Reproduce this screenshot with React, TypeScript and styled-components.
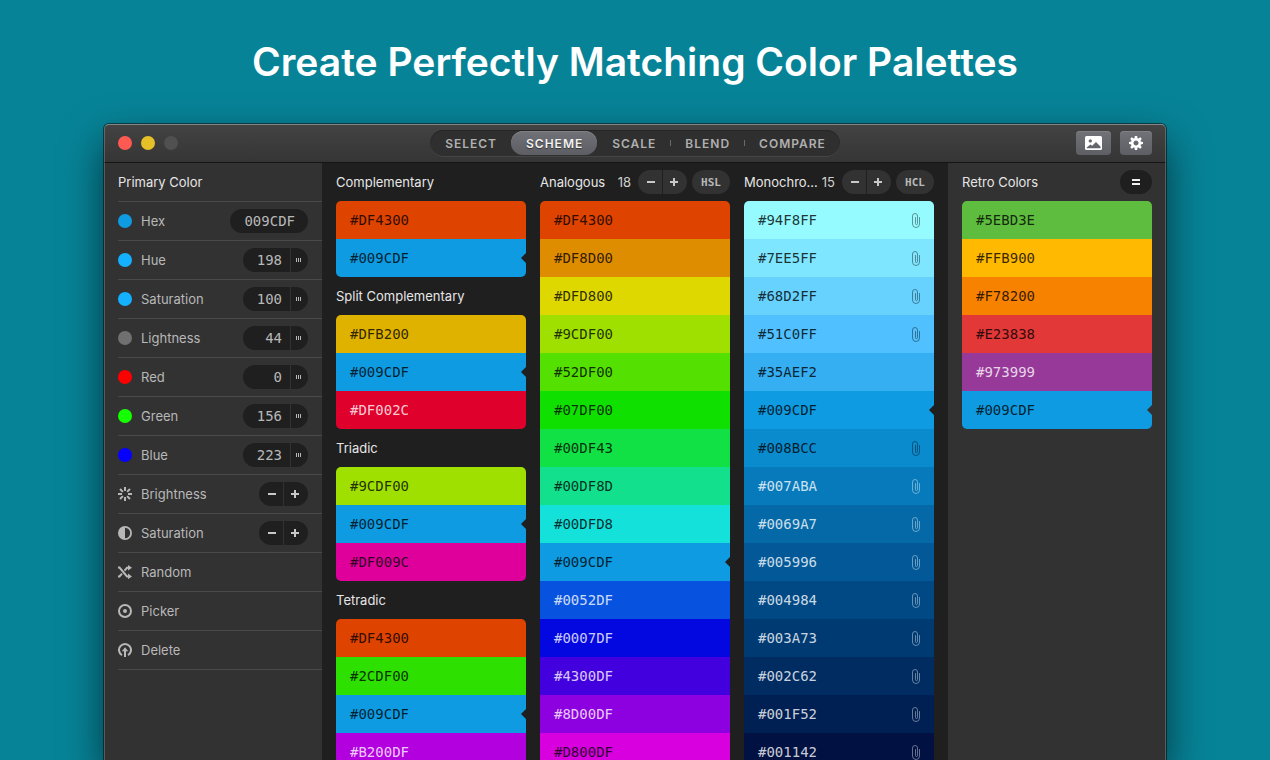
import React from "react";
import styled, { createGlobalStyle } from "styled-components";

const sans = `Inter, "Liberation Sans", sans-serif`;
const mono = `"DejaVu Sans Mono", "Liberation Mono", monospace`;

const GlobalStyle = createGlobalStyle`
  *, *::before, *::after { box-sizing: border-box; }
  body { margin: 0; background: #078397; font-family: ${sans}; -webkit-font-smoothing: antialiased; }
  button, input { font: inherit; color: inherit; background: none; border: 0; margin: 0; padding: 0; }
  button { cursor: pointer; }
  ul { list-style: none; margin: 0; padding: 0; }
`;

const Page = styled.main`
  height: 100vh;
  min-width: 1100px;
  display: flex;
  flex-direction: column;
  overflow: hidden;
  padding: 0 104px;
`;

const Headline = styled.h1`
  margin: 0;
  height: 124px;
  flex: none;
  display: flex;
  align-items: center;
  justify-content: center;
  color: #fff;
  font-size: 39px;
  line-height: 48px;
  font-weight: 600;
`;

const Window = styled.section`
  position: relative;
  flex: 1;
  min-height: 0;
  display: flex;
  flex-direction: column;
  border-radius: 5px 5px 0 0;
  box-shadow: 0 0 0 1px rgba(0, 0, 0, 0.5), 0 18px 42px rgba(0, 0, 0, 0.6);

  &::after {
    content: "";
    position: absolute;
    inset: 0;
    border: 1px solid rgba(255, 255, 255, 0.2);
    border-top-color: rgba(255, 255, 255, 0.36);
    border-bottom: 0;
    border-radius: 5px 5px 0 0;
    pointer-events: none;
  }
`;

const TitleBar = styled.header`
  flex: none;
  height: 39px;
  display: grid;
  grid-template-columns: 1fr auto 1fr;
  align-items: center;
  padding: 0 14px;
  background: linear-gradient(#434343, #353535);
  border-bottom: 1px solid #151515;
  border-radius: 5px 5px 0 0;
`;

const Lights = styled.div`
  display: flex;
  gap: 9px;
`;

const Light = styled.button<{ $color: string }>`
  width: 14px;
  height: 14px;
  border-radius: 50%;
  background: ${(p) => p.$color};
`;

const Tabs = styled.nav`
  display: flex;
  align-items: center;
  height: 27px;
  padding: 1px 0;
  border-radius: 14px;
  background: #2f2f2f;
  box-shadow: inset 0 1px 0 #262626, inset 0 -1px 0 #454545;
`;

const Tab = styled.button<{ $active?: boolean; $divided?: boolean }>`
  position: relative;
  height: 24px;
  padding: 0 14px 0 15px;
  border-radius: 12px;
  font-size: 12px;
  font-weight: 600;
  letter-spacing: 1px;
  color: ${(p) => (p.$active ? "#f2f2f2" : "#b0b0b0")};
  background: ${(p) => (p.$active ? "linear-gradient(#717277, #5d5e63)" : "none")};
  text-shadow: ${(p) => (p.$active ? "0 1px 1px rgba(0, 0, 0, 0.5)" : "none")};
  box-shadow: ${(p) => (p.$active ? "inset 0 1px 0 #7f8084" : "none")};

  &::before {
    content: "";
    display: ${(p) => (p.$divided ? "block" : "none")};
    position: absolute;
    left: 0;
    top: 9px;
    width: 1px;
    height: 6px;
    background: #6a6a6a;
  }
`;

const Tools = styled.div`
  display: flex;
  justify-content: flex-end;
  gap: 9px;
`;

const ToolButton = styled.button<{ $wide?: boolean }>`
  width: ${(p) => (p.$wide ? 35 : 32)}px;
  height: 24px;
  display: flex;
  align-items: center;
  justify-content: center;
  border-radius: 4px;
  color: #fff;
  background: linear-gradient(#717277, #5e5f64);
  box-shadow: inset 0 1px 0 #808185;
`;

const Body = styled.div`
  flex: 1;
  min-height: 0;
  display: grid;
  grid-template-columns: 218px 1fr 218px;
  overflow: hidden;
`;

const Sidebar = styled.aside`
  padding-left: 14px;
  background: #323232;
`;

const PanelTitle = styled.h2`
  margin: 0;
  font-size: 13px;
  line-height: 38px;
  font-weight: 400;
  color: #e6e6e6;
  white-space: nowrap;
`;

const SidebarHead = styled.div`
  height: 39px;
  border-bottom: 1px solid #494949;
`;

const Row = styled.li`
  height: 39px;
  display: flex;
  align-items: center;
  padding-right: 14px;
  border-bottom: 1px solid #494949;
  color: #b8b8b8;
  font-size: 13px;
`;

const Dot = styled.span<{ $color: string }>`
  width: 14px;
  height: 14px;
  border-radius: 50%;
  background: ${(p) => p.$color};
`;

const RowLabel = styled.label`
  flex: 1;
  margin-left: 9px;
`;

const RowAction = styled.button`
  flex: 1;
  display: flex;
  align-items: center;
  gap: 9px;
  text-align: left;
`;

const Field = styled.span`
  height: 24px;
  display: flex;
  gap: 1px;
  border-radius: 12px;
  overflow: hidden;
`;

const Value = styled.input<{ $wide?: boolean }>`
  width: ${(p) => (p.$wide ? 78 : 47)}px;
  height: 24px;
  padding-right: ${(p) => (p.$wide ? 13 : 8)}px;
  background: #1f1f1f;
  font-family: ${mono};
  font-size: 14px;
  text-align: right;
  color: #b8b8b8;
`;

const Grip = styled.button`
  width: 17px;
  height: 24px;
  display: flex;
  align-items: center;
  justify-content: center;
  padding-right: 2px;
  background: #1f1f1f;
  color: #b8b8b8;
`;

const StepButton = styled.button<{ $raised?: boolean }>`
  width: 24px;
  height: 24px;
  display: flex;
  align-items: center;
  justify-content: center;
  background: ${(p) => (p.$raised ? "#323232" : "#1f1f1f")};
  color: #c8c8c8;

  &:first-child { padding-left: 2px; }
  &:last-child { padding-right: 2px; }
`;

const ModeButton = styled.button`
  width: 38px;
  height: 24px;
  margin-left: 5px;
  border-radius: 12px;
  background: #323232;
  color: #b8b8b8;
  font-family: ${mono};
  font-size: 11px;
  font-weight: 700;
`;

const EqualButton = styled.button`
  width: 32px;
  height: 24px;
  display: flex;
  align-items: center;
  justify-content: center;
  border-radius: 12px;
  background: #1f1f1f;
  color: #f0f0f0;
`;

const Schemes = styled.div`
  display: grid;
  grid-template-columns: repeat(3, minmax(0, 1fr));
  gap: 14px;
  padding: 0 14px;
  background: #1f1f1f;
`;

const Column = styled.div`
  min-width: 0;
`;

const Retro = styled.aside`
  padding: 0 14px;
  background: #323232;
`;

const Head = styled.div`
  height: 38px;
  display: flex;
  align-items: center;
  justify-content: space-between;
`;

const HeadControls = styled.div`
  flex: none;
  display: flex;
  align-items: center;
`;

const Count = styled.span`
  margin-right: 7px;
  font-size: 13px;
  color: #d0d0d0;
`;

const Swatches = styled.ul`
  border-radius: 5px;
  overflow: hidden;
`;

const Swatch = styled.button<{ $color: string; $light?: boolean }>`
  position: relative;
  width: 100%;
  height: 38px;
  display: flex;
  align-items: center;
  justify-content: space-between;
  padding: 0 14px;
  background: ${(p) => p.$color};
  color: ${(p) => (p.$light ? "rgba(255, 255, 255, 0.8)" : "rgba(0, 0, 0, 0.8)")};
  font-family: ${mono};
  font-size: 14px;
`;

const Notch = styled.span<{ $color: string }>`
  position: absolute;
  right: 0;
  top: 14px;
  border: 5px solid transparent;
  border-right-color: ${(p) => p.$color};
  border-left-width: 0;
`;

const Clip = () => (
  <svg width="8" height="15" viewBox="0 0 8 15" fill="none" stroke="currentColor" strokeLinecap="round" opacity="0.5">
    <path d="M7.500 4.500v6.500a3.500 3.500 0 0 1-7 0V3a2.500 2.500 0 0 1 5 0v7.500a1 1 0 0 1-2 0V4.500" />
  </svg>
);

const Minus = () => (
  <svg width="10" height="10" viewBox="0 0 10 10"><path d="M1 4h8v2H1z" fill="currentColor" /></svg>
);
const Plus = () => (
  <svg width="10" height="10" viewBox="0 0 10 10"><path d="M1 4h3V1h2v3h3v2H6v3H4V6H1z" fill="currentColor" /></svg>
);
const Equal = () => (
  <svg width="10" height="10" viewBox="0 0 10 10"><path d="M1 2h8v2H1zM1 6h8v2H1z" fill="currentColor" /></svg>
);
const Bars = () => (
  <svg width="5" height="4" viewBox="0 0 5 4"><path d="M0 0h1v4H0zM2 0h1v4H2zM4 0h1v4H4z" fill="currentColor" /></svg>
);

const Photo = () => (
  <svg width="17" height="14" viewBox="0 0 17 14">
    <path
      fill="currentColor"
      fillRule="evenodd"
      d="M1.500 0h14A1.500 1.500 0 0 1 17 1.500v11a1.500 1.500 0 0 1-1.500 1.500h-14A1.500 1.500 0 0 1 0 12.500v-11A1.500 1.500 0 0 1 1.500 0zM5.300 3.200a1.700 1.700 0 1 0 0 3.400 1.700 1.700 0 0 0 0-3.400zM1.700 12.200h13.800V10.500L11 6 7.200 9.800 5.400 8.400 1.700 11.500z"
    />
  </svg>
);

const Gear = () => (
  <svg width="14" height="14" viewBox="-7 -7 14 14">
    <circle r="3.800" fill="none" stroke="currentColor" strokeWidth="2.600" />
    {[0, 45, 90, 135, 180, 225, 270, 315].map((a) => (
      <path key={a} d="M-1.600-4.500L-1.100-7h2.200L1.600-4.500z" fill="currentColor" transform={`rotate(${a})`} />
    ))}
  </svg>
);

const Brightness = () => (
  <svg width="14" height="14" viewBox="-7 -7 14 14" stroke="currentColor" strokeWidth="2">
    {[0, 45, 90, 135, 180, 225, 270, 315].map((a) => (
      <path key={a} d="M0-3V-7" transform={`rotate(${a})`} />
    ))}
  </svg>
);

const Contrast = () => (
  <svg width="14" height="14" viewBox="0 0 14 14">
    <circle cx="7" cy="7" r="6.100" fill="none" stroke="currentColor" strokeWidth="1.800" />
    <path d="M7 1a6 6 0 0 0 0 12z" fill="currentColor" />
  </svg>
);

const Shuffle = () => (
  <svg width="14" height="14" viewBox="0 0 14 14">
    <path d="M0 2.500h1.500l7.500 9h2M0 11.500h1.500l2.500-2.800M6.500 5.600L9 2.800h2" fill="none" stroke="currentColor" strokeWidth="2" />
    <path d="M10 0l4 2.800-4 2.800zM10 8.600l4 2.800-4 2.800z" fill="currentColor" />
  </svg>
);

const Picker = () => (
  <svg width="14" height="14" viewBox="0 0 14 14">
    <circle cx="7" cy="7" r="6" fill="none" stroke="currentColor" strokeWidth="2" />
    <circle cx="7" cy="7" r="2" fill="currentColor" />
  </svg>
);

const Remove = () => (
  <svg width="14" height="14" viewBox="0 0 14 14" fill="none" stroke="currentColor">
    <path d="M4 12.200a6 6 0 1 1 6 0" strokeWidth="2" />
    <path d="M7 14V6" strokeWidth="2" />
    <path d="M3.800 8.200L7 4.200l3.200 4z" fill="currentColor" stroke="none" />
  </svg>
);

type Mark = "clip" | "notch";
type Color = { hex: string; fill?: string; light?: boolean; mark?: Mark };

const primary: Color = { hex: "#009CDF", fill: "#0e9be1", mark: "notch" };
const c = (hex: string, fill?: string): Color => ({ hex, fill });
const w = (hex: string, fill?: string): Color => ({ hex, fill, light: true });
const clipped = (color: Color): Color => ({ ...color, mark: "clip" });

const harmonies = [
  { name: "Complementary", colors: [c("#DF4300"), primary] },
  { name: "Split Complementary", colors: [c("#DFB200"), primary, w("#DF002C")] },
  { name: "Triadic", colors: [c("#9CDF00", "#9fe000"), primary, c("#DF009C")] },
  { name: "Tetradic", colors: [c("#DF4300"), c("#2CDF00", "#2ee000"), primary, w("#B200DF")] },
];

const analogous = [
  c("#DF4300"), c("#DF8D00"), c("#DFD800"), c("#9CDF00", "#9fe000"), c("#52DF00", "#54e000"),
  c("#07DF00", "#10e000"), c("#00DF43", "#11e144"), c("#00DF8D", "#12e08d"), c("#00DFD8", "#14e1da"),
  primary, w("#0052DF", "#0753e0"), w("#0007DF", "#0408e0"), w("#4300DF"), w("#8D00DF"), c("#D800DF"),
];

const monochrome = [
  clipped(c("#94F8FF", "#95fbff")), clipped(c("#7EE5FF", "#7fe6ff")), clipped(c("#68D2FF")), clipped(c("#51C0FF")),
  c("#35AEF2"), primary, clipped(c("#008BCC", "#0a8bcd")), clipped(w("#007ABA", "#077abb")),
  clipped(w("#0069A7", "#0569a8")), clipped(w("#005996", "#035997")), clipped(w("#004984")),
  clipped(w("#003A73")), clipped(w("#002C62")), clipped(w("#001F52")), clipped(w("#001142")),
];

const retro = [c("#5EBD3E"), c("#FFB900"), c("#F78200"), c("#E23838"), w("#973999"), primary];

const channels = [
  { id: "hex", label: "Hex", value: "009CDF", dot: "#0e9be1", wide: true },
  { id: "hue", label: "Hue", value: "198", dot: "#13b1ff" },
  { id: "saturation", label: "Saturation", value: "100", dot: "#13b1ff" },
  { id: "lightness", label: "Lightness", value: "44", dot: "#707070" },
  { id: "red", label: "Red", value: "0", dot: "#ff0000" },
  { id: "green", label: "Green", value: "156", dot: "#14ff00" },
  { id: "blue", label: "Blue", value: "223", dot: "#0500ff" },
];

const SwatchList = ({ colors, surface = "#1f1f1f" }: { colors: Color[]; surface?: string }) => (
  <Swatches>
    {colors.map((color) => (
      <li key={color.hex}>
        <Swatch $color={color.fill ?? color.hex} $light={color.light}>
          {color.hex}
          {color.mark === "clip" && <Clip />}
          {color.mark === "notch" && <Notch $color={surface} />}
        </Swatch>
      </li>
    ))}
  </Swatches>
);

const Stepper = ({ raised, name }: { raised?: boolean; name: string }) => (
  <Field>
    <StepButton $raised={raised} aria-label={`Decrease ${name}`}><Minus /></StepButton>
    <StepButton $raised={raised} aria-label={`Increase ${name}`}><Plus /></StepButton>
  </Field>
);

const CountedHead = ({ title, count, mode }: { title: string; count: number; mode: string }) => (
  <Head>
    <PanelTitle>{title}</PanelTitle>
    <HeadControls>
      <Count>{count}</Count>
      <Stepper raised name={title} />
      <ModeButton>{mode}</ModeButton>
    </HeadControls>
  </Head>
);

export default function App() {
  return (
    <Page>
      <GlobalStyle />
      <Headline>Create Perfectly Matching Color Palettes</Headline>
      <Window>
        <TitleBar>
          <Lights>
            <Light $color="#ff5a52" aria-label="Close" />
            <Light $color="#e6c029" aria-label="Minimize" />
            <Light $color="#505050" aria-label="Zoom" />
          </Lights>
          <Tabs>
            <Tab>SELECT</Tab>
            <Tab $active>SCHEME</Tab>
            <Tab>SCALE</Tab>
            <Tab $divided>BLEND</Tab>
            <Tab $divided>COMPARE</Tab>
          </Tabs>
          <Tools>
            <ToolButton $wide aria-label="Image"><Photo /></ToolButton>
            <ToolButton aria-label="Settings"><Gear /></ToolButton>
          </Tools>
        </TitleBar>
        <Body>
          <Sidebar>
            <SidebarHead><PanelTitle>Primary Color</PanelTitle></SidebarHead>
            <ul>
              {channels.map((ch) => (
                <Row key={ch.id}>
                  <Dot $color={ch.dot} />
                  <RowLabel htmlFor={ch.id}>{ch.label}</RowLabel>
                  <Field>
                    <Value id={ch.id} defaultValue={ch.value} $wide={ch.wide} />
                    {!ch.wide && <Grip aria-label={`Adjust ${ch.label}`}><Bars /></Grip>}
                  </Field>
                </Row>
              ))}
              <Row><RowAction><Brightness />Brightness</RowAction><Stepper name="brightness" /></Row>
              <Row><RowAction><Contrast />Saturation</RowAction><Stepper name="saturation" /></Row>
              <Row><RowAction><Shuffle />Random</RowAction></Row>
              <Row><RowAction><Picker />Picker</RowAction></Row>
              <Row><RowAction><Remove />Delete</RowAction></Row>
            </ul>
          </Sidebar>
          <Schemes>
            <Column>
              {harmonies.map((h) => (
                <React.Fragment key={h.name}>
                  <Head><PanelTitle>{h.name}</PanelTitle></Head>
                  <SwatchList colors={h.colors} />
                </React.Fragment>
              ))}
            </Column>
            <Column>
              <CountedHead title="Analogous" count={18} mode="HSL" />
              <SwatchList colors={analogous} />
            </Column>
            <Column>
              <CountedHead title="Monochro…" count={15} mode="HCL" />
              <SwatchList colors={monochrome} />
            </Column>
          </Schemes>
          <Retro>
            <Head>
              <PanelTitle>Retro Colors</PanelTitle>
              <EqualButton aria-label="Equalize"><Equal /></EqualButton>
            </Head>
            <SwatchList colors={retro} surface="#323232" />
          </Retro>
        </Body>
      </Window>
    </Page>
  );
}
